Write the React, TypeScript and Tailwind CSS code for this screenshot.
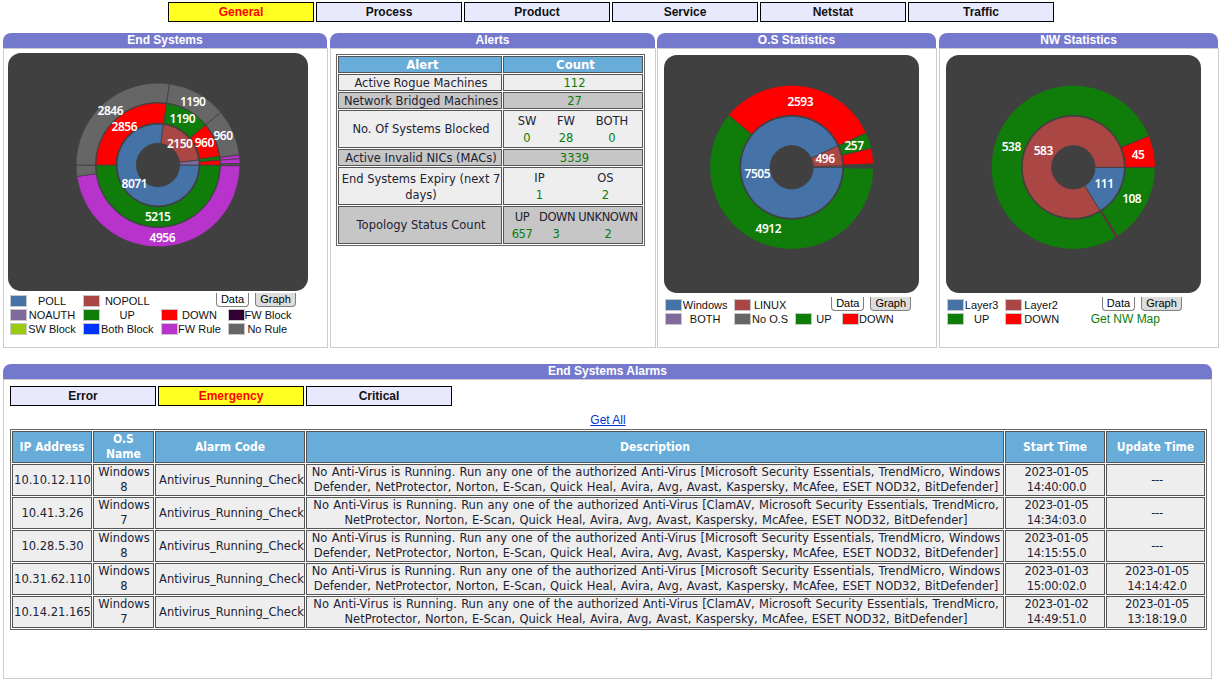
import React from "react";

const BLUE = "#4572a7", MAROON = "#aa4643", VIOLET = "#80699b", GREEN = "#107d0b", RED = "#ff0000",
  PURPLE = "#b833cc", GREY = "#666666", DARK = "#330033", LIME = "#99cc11", ROYAL = "#0033ff";

type Slice = [number, number, string];
type Ring = { r0: number; r1: number; slices: Slice[] };
type Label = [string, number, number];

function arc(cx: number, cy: number, r0: number, r1: number, a0: number, a1: number) {
  const p = (r: number, a: number) => {
    const t = (a * Math.PI) / 180;
    return `${(cx + r * Math.cos(t)).toFixed(2)} ${(cy + r * Math.sin(t)).toFixed(2)}`;
  };
  const large = a1 - a0 > 180 ? 1 : 0;
  return `M${p(r1, a0)}A${r1} ${r1} 0 ${large} 1 ${p(r1, a1)}L${p(r0, a1)}A${r0} ${r0} 0 ${large} 0 ${p(r0, a0)}Z`;
}

function Donut({ w, h, cx, cy, rings, labels }: { w: number; h: number; cx: number; cy: number; rings: Ring[]; labels: Label[] }) {
  return (
    <div className="rounded-[13px] bg-[#404040] shrink-0" style={{ width: w, height: h }}>
      <svg width={w} height={h} className="block">
        {rings.map((ring, i) =>
          ring.slices.map(([a0, a1, c], j) => (
            <path key={`${i}-${j}`} d={arc(cx, cy, ring.r0, ring.r1, a0, a1)} fill={c} stroke="#404040" strokeWidth={0.8} />
          ))
        )}
        {labels.map(([t, x, y], i) => (
          <text key={i} x={x} y={y + 4} textAnchor="middle" fill="#fff" fontSize="12" fontWeight="600" letterSpacing="-0.5" className="font-['Noto_Sans',sans-serif]">
            {t}
          </text>
        ))}
      </svg>
    </div>
  );
}

function Swatch({ c }: { c: string }) {
  return <span className="block w-[17px] h-[12px] border border-[#c8c8c8]" style={{ background: c }} />;
}

function ChartTabs() {
  return (
    <div className="flex justify-end gap-[6px] -mt-[2px] h-[14px]">
      <span className="w-[33px] h-[14px] bg-white border border-t-0 border-[#808080] rounded-b-[4px] text-center text-[11px] leading-[13px] text-black">Data</span>
      <span className="w-[41px] h-[14px] bg-[#dddddd] border border-t-0 border-[#808080] rounded-b-[4px] text-center text-[11px] leading-[13px] text-black">Graph</span>
    </div>
  );
}

function LegendText({ children, left }: { children: React.ReactNode; left?: boolean }) {
  return <span className={`whitespace-nowrap text-[11px] leading-[14px] text-[#111] ${left ? "text-left" : "text-center pr-[6px]"}`}>{children}</span>;
}

function PanelHead({ title, className }: { title: string; className?: string }) {
  return (
    <div className={`h-[15px] bg-[#7579cd] rounded-t-[8px] text-center text-white font-bold text-[12px] leading-[14px] ${className ?? ""}`}>{title}</div>
  );
}

function Panel({ title, width, pad, children }: { title: string; width: number; pad: string; children: React.ReactNode }) {
  return (
    <section className="shrink-0 flex flex-col" style={{ width }}>
      <PanelHead title={title} className="mr-[1px]" />
      <div className={`h-[300px] border border-[#cccccc] bg-white ${pad}`}>{children}</div>
    </section>
  );
}

function NavTab({ label, active }: { label: string; active?: boolean }) {
  return (
    <div className={`w-[146px] h-[20px] border border-black text-center font-bold text-[12px] leading-[18px] ${active ? "bg-[#ffff22] text-[#ff0000]" : "bg-[#e9e9fd] text-[#111]"}`}>
      {label}
    </div>
  );
}

const td = "border border-[#555555] text-center align-middle text-[#222233] py-0 pr-0";
const th = "border border-[#555555] bg-[#68acd9] text-white text-center align-middle p-0 font-['DejaVu_Sans_Condensed','DejaVu_Sans',sans-serif] font-bold";
const one = "leading-[13px] pt-[2px]";

function V({ children }: { children: React.ReactNode }) {
  return <span className="text-[#0a7d0a]">{children}</span>;
}

function AlertsTable() {
  const l = "bg-[#eeeeee]", d = "bg-[#c6c6c6]";
  return (
    <table className="table-fixed w-[309px] border-separate border-spacing-[1px] border border-[#666666] font-['DejaVu_Sans',sans-serif] text-[11.5px] leading-[15px]">
      <colgroup><col className="w-[164px]" /><col className="w-[140px]" /></colgroup>
      <tbody>
        <tr className="h-[17px]">
          <th className={`${th} text-[13px]`}><span className="pl-[5px]">Alert</span></th>
          <th className={`${th} text-[13px]`}><span className="pl-[5px]">Count</span></th>
        </tr>
        <tr className="h-[17px]"><td className={`${td} ${l} ${one} pl-[2px]`}>Active Rogue Machines</td><td className={`${td} ${l} ${one} pl-[3px]`}><V>112</V></td></tr>
        <tr className="h-[17px]"><td className={`${td} ${d} ${one} pl-[2px] whitespace-nowrap`}>Network Bridged Machines</td><td className={`${td} ${d} ${one} pl-[3px]`}><V>27</V></td></tr>
        <tr className="h-[38px]">
          <td className={`${td} ${l} pt-[1px] pl-[2px]`}>No. Of Systems Blocked</td>
          <td className={`${td} ${l} pl-0`}>
            <div className="grid grid-cols-[46px_32px_60px] leading-[17px] pt-[1px]">
              <span>SW</span><span>FW</span><span>BOTH</span>
              <V>0</V><V>28</V><V>0</V>
            </div>
          </td>
        </tr>
        <tr className="h-[17px]"><td className={`${td} ${d} ${one} pl-[2px] whitespace-nowrap`}>Active Invalid NICs (MACs)</td><td className={`${td} ${d} ${one} pl-[3px]`}><V>3339</V></td></tr>
        <tr className="h-[38px]">
          <td className={`${td} ${l} pt-[1px] pl-[2px] leading-[16px]`}>End Systems Expiry (next 7<br />days)</td>
          <td className={`${td} ${l} pl-0`}>
            <div className="grid grid-cols-[71px_61px] leading-[17px] pt-[1px]">
              <span>IP</span><span>OS</span>
              <V>1</V><V>2</V>
            </div>
          </td>
        </tr>
        <tr className="h-[38px]">
          <td className={`${td} ${d} pt-[1px] pl-[2px]`}>Topology Status Count</td>
          <td className={`${td} ${d} pl-0`}>
            <div className="grid grid-cols-[34px_34px_70px] pl-[1px] pt-[1px] whitespace-nowrap leading-[17px] tracking-[-0.4px]">
              <span>UP</span><span>DOWN</span><span>UNKNOWN</span>
              <V>657</V><V>3</V><V>2</V>
            </div>
          </td>
        </tr>
      </tbody>
    </table>
  );
}

const D1 = ["No Anti-Virus is Running. Run any one of the authorized Anti-Virus [Microsoft Security Essentials, TrendMicro, Windows", "Defender, NetProtector, Norton, E-Scan, Quick Heal, Avira, Avg, Avast, Kaspersky, McAfee, ESET NOD32, BitDefender]"];
const D2 = ["No Anti-Virus is Running. Run any one of the authorized Anti-Virus [ClamAV, Microsoft Security Essentials, TrendMicro,", "NetProtector, Norton, E-Scan, Quick Heal, Avira, Avg, Avast, Kaspersky, McAfee, ESET NOD32, BitDefender]"];

const rows = [
  ["10.10.12.110", "8", D1, "2023-01-05", "14:40:00.0", null, null],
  ["10.41.3.26", "7", D2, "2023-01-05", "14:34:03.0", null, null],
  ["10.28.5.30", "8", D1, "2023-01-05", "14:15:55.0", null, null],
  ["10.31.62.110", "8", D1, "2023-01-03", "15:00:02.0", "2023-01-05", "14:14:42.0"],
  ["10.14.21.165", "7", D2, "2023-01-02", "14:49:51.0", "2023-01-05", "13:18:19.0"],
] as const;

function AlarmTable() {
  const c = `${td} bg-[#eeeeee] whitespace-nowrap overflow-hidden`;
  const h = `${th} text-[12px]`;
  return (
    <table className="table-fixed w-[1197px] border-separate border-spacing-[1px] border border-[#666666] font-['DejaVu_Sans',sans-serif] text-[11.5px] leading-[15px]">
      <colgroup>
        <col className="w-[80px]" /><col className="w-[61px]" /><col className="w-[150px]" /><col className="w-[698px]" /><col className="w-[100px]" /><col className="w-[99px]" />
      </colgroup>
      <tbody>
        <tr className="h-[32px] leading-[15px]">
          <th className={h}>IP Address</th><th className={h}>O.S<br />Name</th><th className={h}>Alarm Code</th><th className={h}>Description</th><th className={h}>Start Time</th><th className={h}>Update Time</th>
        </tr>
        {rows.map((r) => (
          <tr key={r[0]} className="h-[32px]">
            <td className={`${c} pl-[1px]`}>{r[0]}</td>
            <td className={`${c} pl-[1px]`}>Windows<br />{r[1]}</td>
            <td className={`${c} pl-[3px]`}>Antivirus_Running_Check</td>
            <td className={`${c} pl-[2px] [word-spacing:0.6px]`}>{r[2][0]}<br />{r[2][1]}</td>
            <td className={`${c} pl-[3px] tracking-[-0.3px]`}>{r[3]}<br />{r[4]}</td>
            <td className={`${c} pl-[3px] tracking-[-0.3px]`}>{r[5] ? <>{r[5]}<br />{r[6]}</> : "---"}</td>
          </tr>
        ))}
      </tbody>
    </table>
  );
}

export default function App() {
  return (
    <div className="w-[1222px] h-[681px] overflow-hidden bg-white font-['Liberation_Sans',Arial,sans-serif]">
      <nav className="flex justify-center gap-[2px] pt-[2px]">
        <NavTab label="General" active />
        <NavTab label="Process" />
        <NavTab label="Product" />
        <NavTab label="Service" />
        <NavTab label="Netstat" />
        <NavTab label="Traffic" />
      </nav>

      <div className="flex mt-[11px] ml-[3px]">
        <Panel title="End Systems" width={325} pad="pt-[4px] pl-[4px]">
          <Donut
            w={300} h={238} cx={150} cy={112}
            rings={[
              { r0: 62.5, r1: 82, slices: [[0.6, 172, PURPLE], [172, 180, GREY], [180, 278, GREY], [278, 320, GREY], [320, 353, GREY], [353, 355.6, PURPLE], [355.6, 359, PURPLE], [359, 360, GREY]] },
              { r0: 42, r1: 62, slices: [[0, 180, GREEN], [180, 278, RED], [278, 320, GREEN], [320, 352, RED], [352, 355.6, GREEN], [355.6, 360, RED]] },
              { r0: 21.7, r1: 41, slices: [[0, 277.5, BLUE], [277.5, 353, MAROON], [353, 360, VIOLET]] },
            ]}
            labels={[["2846", 102.3, 57.7], ["1190", 184.7, 48.7], ["960", 215, 82.7], ["2856", 116.3, 73.7], ["1190", 174.3, 66.3], ["2150", 171.7, 90.7], ["960", 196.3, 90.3], ["8071", 126.3, 131.3], ["5215", 149.7, 163.7], ["4956", 154.3, 184.7]]}
          />
          <div className="grid grid-cols-[17px_56px_17px_60.5px_17px_50px_17px_51.5px] auto-rows-[14px] items-center ml-[2px] mt-[3px]">
            <Swatch c={BLUE} /><LegendText>POLL</LegendText><Swatch c={MAROON} /><LegendText>NOPOLL</LegendText>
            <div className="col-span-4"><ChartTabs /></div>
            <Swatch c={VIOLET} /><LegendText>NOAUTH</LegendText><Swatch c={GREEN} /><LegendText>UP</LegendText><Swatch c={RED} /><LegendText>DOWN</LegendText><Swatch c={DARK} /><LegendText left>FW Block</LegendText>
            <Swatch c={LIME} /><LegendText>SW Block</LegendText><Swatch c={ROYAL} /><LegendText>Both Block</LegendText><Swatch c={PURPLE} /><LegendText>FW Rule</LegendText><Swatch c={GREY} /><LegendText>No Rule</LegendText>
          </div>
        </Panel>

        <div className="w-[2px] shrink-0" />

        <Panel title="Alerts" width={326} pad="pt-[5px] pl-[5px]">
          <AlertsTable />
        </Panel>

        <div className="w-[1px] shrink-0" />

        <Panel title="O.S Statistics" width={280} pad="pt-[6px] pl-[6px]">
          <Donut
            w={255} h={238} cx={127.7} cy={112.3}
            rings={[
              { r0: 52, r1: 82, slices: [[0.7, 219.6, GREEN], [219.6, 335.3, RED], [335.3, 346.6, GREEN], [346.6, 357.5, RED], [358.2, 359.4, "#1c5a1a"]] },
              { r0: 21.7, r1: 51, slices: [[0, 335, BLUE], [335, 358.5, MAROON], [358.5, 360, VIOLET]] },
            ]}
            labels={[["2593", 136.3, 46.7], ["257", 190, 90.7], ["496", 161, 103.7], ["7505", 93.3, 119.3], ["4912", 104.3, 173.7]]}
          />
          <div className="grid grid-cols-[17px_52.3px_17px_43.7px_17px_30px_17px_52.3px] auto-rows-[14px] items-center ml-[1px] mt-[5px]">
            <Swatch c={BLUE} /><LegendText>Windows</LegendText><Swatch c={MAROON} /><LegendText>LINUX</LegendText>
            <div className="col-span-4"><ChartTabs /></div>
            <Swatch c={VIOLET} /><LegendText>BOTH</LegendText><Swatch c={GREY} /><LegendText>No O.S</LegendText><Swatch c={GREEN} /><LegendText>UP</LegendText><Swatch c={RED} /><LegendText left>DOWN</LegendText>
          </div>
        </Panel>

        <div className="w-[2px] shrink-0" />

        <Panel title="NW Statistics" width={280} pad="pt-[6px] pl-[6px]">
          <Donut
            w={255} h={238} cx={127.3} cy={112.3}
            rings={[
              { r0: 52, r1: 82, slices: [[0, 57.4, GREEN], [57.4, 58.6, "#b01030"], [58.6, 337.5, GREEN], [337.5, 360, RED]] },
              { r0: 21.7, r1: 51, slices: [[0, 58.3, BLUE], [58.3, 360, MAROON]] },
            ]}
            labels={[["538", 65.3, 92.3], ["583", 97.3, 95.7], ["45", 192, 99.7], ["111", 158, 128.7], ["108", 185.7, 143.7]]}
          />
          <div className="grid grid-cols-[17px_41.3px_17px_159.7px] auto-rows-[14px] items-center ml-[1px] mt-[5px]">
            <Swatch c={BLUE} /><LegendText>Layer3</LegendText><Swatch c={MAROON} />
            <div className="flex items-center justify-between pl-[2px]">
              <LegendText left>Layer2</LegendText>
              <ChartTabs />
            </div>
            <Swatch c={GREEN} /><LegendText>UP</LegendText><Swatch c={RED} />
            <div className="flex items-center justify-between pl-[2px] pr-[22px]">
              <LegendText left>DOWN</LegendText>
              <span className="text-[12px] leading-[14px] text-[#0a7d0a] whitespace-nowrap">Get NW Map</span>
            </div>
          </div>
        </Panel>
      </div>

      <section className="mt-[16px] ml-[3px] w-[1209px]">
        <PanelHead title="End Systems Alarms" />
        <div className="h-[300px] border border-[#cccccc] bg-white pt-[6px] pl-[6px]">
          <div className="flex gap-[2px]">
            <NavTab label="Error" />
            <NavTab label="Emergency" active />
            <NavTab label="Critical" />
          </div>
          <div className="mt-[7px] h-[14px] text-center text-[12px] leading-[14px] pr-[5px]">
            <a className="text-[#0033cc] underline">Get All</a>
          </div>
          <div className="mt-[2px]">
            <AlarmTable />
          </div>
        </div>
      </section>
    </div>
  );
}
